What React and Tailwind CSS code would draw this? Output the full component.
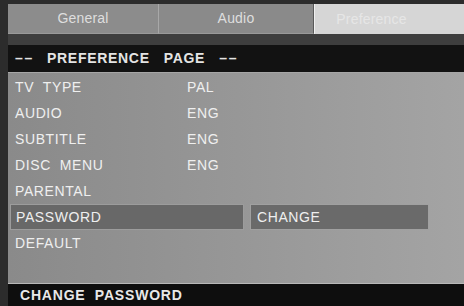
const rows = [
  { label: 'TV  TYPE', value: 'PAL' },
  { label: 'AUDIO', value: 'ENG' },
  { label: 'SUBTITLE', value: 'ENG' },
  { label: 'DISC  MENU', value: 'ENG' },
  { label: 'PARENTAL', value: '' },
  { label: 'PASSWORD', value: 'CHANGE', active: true },
  { label: 'DEFAULT', value: '' },
]

const Dashes = () => (
  <span className="w-[18px] flex justify-between">
    <span>–</span>
    <span>–</span>
  </span>
)

export default function App() {
  return (
    <div
      className="w-[464px] h-[306px] bg-[#2c2c2c] pl-[8px] pt-[4px] flex flex-col overflow-hidden"
      style={{ fontFamily: '"Liberation Sans", Arial, sans-serif' }}
    >
      <div className="flex h-[30px] text-[14px] tracking-[0.2px]">
        <div className="w-[151px] bg-[#8c8c8c] border-r border-[#a8a8a8] border-b border-b-[#9a9a9a] flex items-center justify-center text-[#dedede]">
          General
        </div>
        <div className="w-[155px] bg-[#8a8a8a] border-r border-[#5a5a5a] border-b border-b-[#9a9a9a] flex items-center justify-center text-[#dedede]">
          Audio
        </div>
        <div className="flex-1 bg-[#d6d6d6] border-l border-[#f0f0f0] flex items-center justify-center pr-[36px] text-[#e6e6e6]">
          Preference
        </div>
      </div>
      <div className="h-[11px] bg-[#3e3e3e]" />
      <div className="h-[27px] bg-[#121212] flex items-center gap-[14px] pl-[7px] text-[14px] font-bold tracking-[0.7px] text-[#e4e4e4]">
        <Dashes />
        <span>PREFERENCE</span>
        <span>PAGE</span>
        <Dashes />
      </div>
      <div className="h-[211px] bg-gradient-to-r from-[#8a8a8a] to-[#a4a4a4] border-t border-[#a6a6a6] pt-[1px] flex flex-col">
        {rows.map((r, i) => (
          <div key={i} className="h-[26px] flex items-stretch text-[14px] tracking-[0.6px] text-[#efefef] whitespace-pre">
            {r.active ? (
              <>
                <div className="ml-[2px] w-[234px] bg-[#686868] border border-[#9c9c9c] flex items-center pl-[5px]">
                  {r.label}
                </div>
                <div className="ml-[6px] w-[179px] bg-[#6a6a6a] border border-[#a0a0a0] flex items-center pl-[6px]">
                  {r.value}
                </div>
              </>
            ) : (
              <>
                <div className="w-[179px] flex items-center pl-[7px]">{r.label}</div>
                <div className="flex items-center">{r.value}</div>
              </>
            )}
          </div>
        ))}
      </div>
      <div className="flex-1 bg-[#0e0e0e] border-t border-[#b8b8b8] flex items-center pl-[12px] text-[14px] font-bold tracking-[0.8px] text-[#e8e8e8] whitespace-pre">
        {'CHANGE  PASSWORD'}
      </div>
    </div>
  )
}
